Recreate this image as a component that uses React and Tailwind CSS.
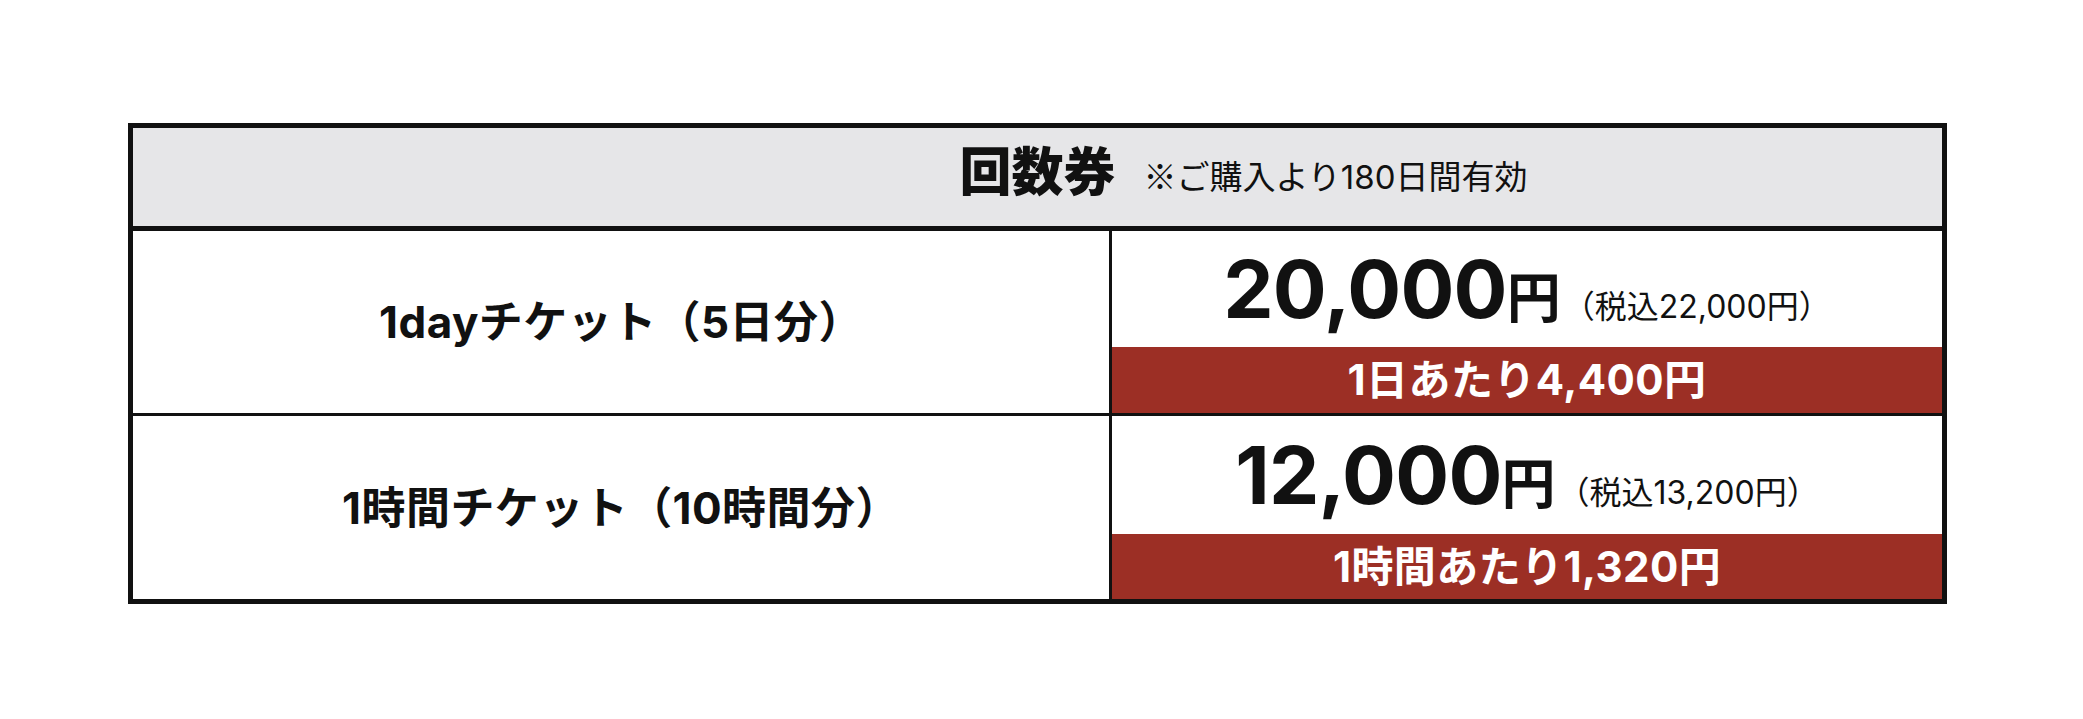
import React from "react";

const tickets = [
  {
    label: "1dayチケット（5日分）",
    price: "20,000",
    tax: "（税込22,000円）",
    unit: "1日あたり4,400円",
    rowClass: "h-[185px] border-b-[3px]",
    topClass: "h-[116px]",
  },
  {
    label: "1時間チケット（10時間分）",
    price: "12,000",
    tax: "（税込13,200円）",
    unit: "1時間あたり1,320円",
    rowClass: "h-[183px]",
    topClass: "h-[118px]",
  },
];

const TicketRow = ({ ticket }) => (
  <div className={`flex border-[#111] ${ticket.rowClass}`}>
    {/* Ticket name */}
    <div className="w-[979px] border-r-[3px] border-[#111] flex items-center justify-center">
      <span className="text-[44px] font-bold tracking-[0.01em] leading-none text-[#111]">
        {ticket.label}
      </span>
    </div>

    {/* Price */}
    <div className="flex-1 flex flex-col">
      <div className={`flex items-center justify-center ${ticket.topClass}`}>
        <div className="flex items-baseline text-[#111] leading-none">
          <span className="text-[80px] font-bold tracking-[-0.01em]">{ticket.price}</span>
          <span className="text-[54px] font-bold">円</span>
          <span className="ml-[2px] text-[32px] font-normal">{ticket.tax}</span>
        </div>
      </div>
      <div className="flex-1 bg-[#9c2f25] flex items-center justify-center">
        <span className="text-[42px] font-bold text-white tracking-[0.01em] leading-none">
          {ticket.unit}
        </span>
      </div>
    </div>
  </div>
);

const App = () => {
  return (
    <div className="min-h-screen bg-white pt-[123px] pl-[128px] font-['Inter','Noto_Sans_CJK_JP',sans-serif]">
      <div className="w-[1819px] border-[5px] border-[#111]">
        {/* Header */}
        <div className="h-[103px] pb-[8px] bg-[#e6e6e8] border-b-[5px] border-[#111] grid grid-cols-[1fr_auto_1fr] items-center">
          <div />
          <h2 className="text-[52px] font-black leading-none text-[#111]">回数券</h2>
          <p className="pl-[28px] pt-[6px] text-[33px] leading-none text-[#111]">
            <span className="font-['Noto_Sans_CJK_JP',sans-serif]">※</span>ご購入より180日間有効
          </p>
        </div>

        {tickets.map((t) => (
          <TicketRow key={t.label} ticket={t} />
        ))}
      </div>
    </div>
  );
};

export default App;
